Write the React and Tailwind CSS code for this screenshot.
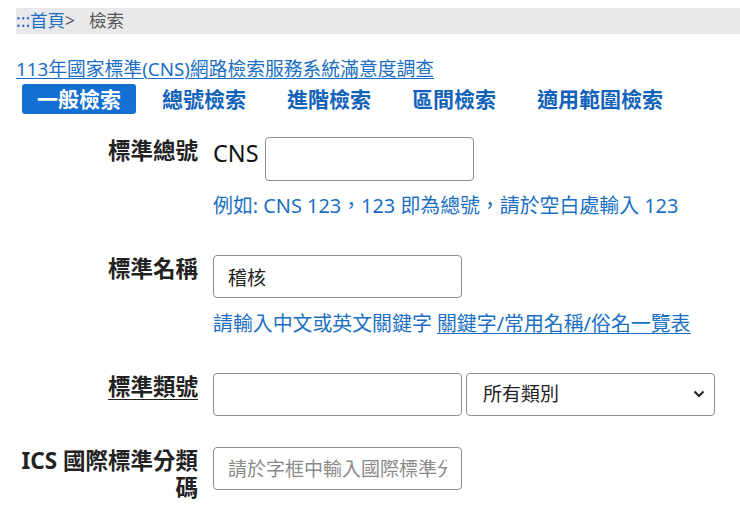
const tabs = ["一般檢索", "總號檢索", "進階檢索", "區間檢索", "適用範圍檢索"];

const FormRow = ({ label, underline, children, className }) => {
  return (
    <div className={"flex " + (className || "")}>
      <div className="w-[182px] shrink-0 text-right text-[22.5px] leading-[27px] font-bold text-[#222]">
        <span className={underline ? "underline underline-offset-4 decoration-1" : ""}>{label}</span>
      </div>
      <div className="ml-[15px] flex-1">{children}</div>
    </div>
  );
};

const inputCls =
  "h-[43px] w-[249px] rounded-[4px] border border-[#8f8f8f] bg-white px-[14px] text-[19px] text-[#222] outline-none placeholder:text-[#8a8a8a]";

export default function App() {
  return (
    <div
      className="min-h-[505px] w-[740px] overflow-hidden bg-white pt-2 pl-4"
      style={{ fontFamily: '"Noto Sans", "Noto Sans CJK TC", sans-serif' }}
    >
      <div className="flex h-[26px] items-center bg-[#e9e9ec] text-[17.5px] leading-none">
        <a href="#" className="text-[#1a6fc4]">:::首頁</a>
        <span className="text-[#555]">&gt;</span>
        <span className="ml-[14px] text-[#555]">檢索</span>
      </div>

      <div className="mt-[23px] text-[18.8px] leading-[24px]">
        <a href="#" className="text-[#1a6fc4] underline decoration-1 underline-offset-2">
          113年國家標準(CNS)網路檢索服務系統滿意度調查
        </a>
      </div>

      <div className="mt-[3px] ml-[6px] flex h-[30px] gap-[11px]">
        {tabs.map((t, i) => (
          <button
            key={t}
            className={
              "flex h-[30px] items-center rounded-[3px] px-[15px] text-[21px] font-bold leading-none " +
              (i === 0 ? "bg-[#1170d2] text-white" : "text-[#1062bb]")
            }
          >
            {t}
          </button>
        ))}
      </div>

      <div className="mt-[23px]">
        <FormRow label="標準總號">
          <div className="flex items-start">
            <span className="mt-[2px] mr-[6px] text-[23.5px] leading-[28px] text-[#111]">CNS</span>
            <input className={inputCls + " !w-[209px] !h-[44px]"} />
          </div>
          <div className="mt-[11px] text-[19.9px] leading-[28px] text-[#1a6fc4]">
            例如: CNS 123，123 即為總號，請於空白處輸入 123
          </div>
        </FormRow>

        <FormRow label="標準名稱" className="mt-[35px]">
          <input className={inputCls} defaultValue="稽核" />
          <div className="mt-[12px] text-[19.9px] leading-[28px] text-[#1a6fc4]">
            請輸入中文或英文關鍵字{" "}
            <a href="#" className="underline decoration-1 underline-offset-2">
              關鍵字/常用名稱/俗名一覽表
            </a>
          </div>
        </FormRow>

        <FormRow label="標準類號" underline className="mt-[35px]">
          <div className="flex gap-[4px]">
            <input className={inputCls} />
            <div className="relative">
              <select className={inputCls + " appearance-none pl-[16px]"}>
                <option>所有類別</option>
              </select>
              <svg
                className="pointer-events-none absolute right-[10px] top-[17px]"
                width="12"
                height="8"
                viewBox="0 0 12 8"
              >
                <path d="M1.5 1.5 L6 6 L10.5 1.5" fill="none" stroke="#222" strokeWidth="2" />
              </svg>
            </div>
          </div>
        </FormRow>

        <FormRow label="ICS 國際標準分類碼" className="mt-[31px]">
          <input className={inputCls} placeholder="請於字框中輸入國際標準分類碼" />
        </FormRow>
      </div>
    </div>
  );
}
